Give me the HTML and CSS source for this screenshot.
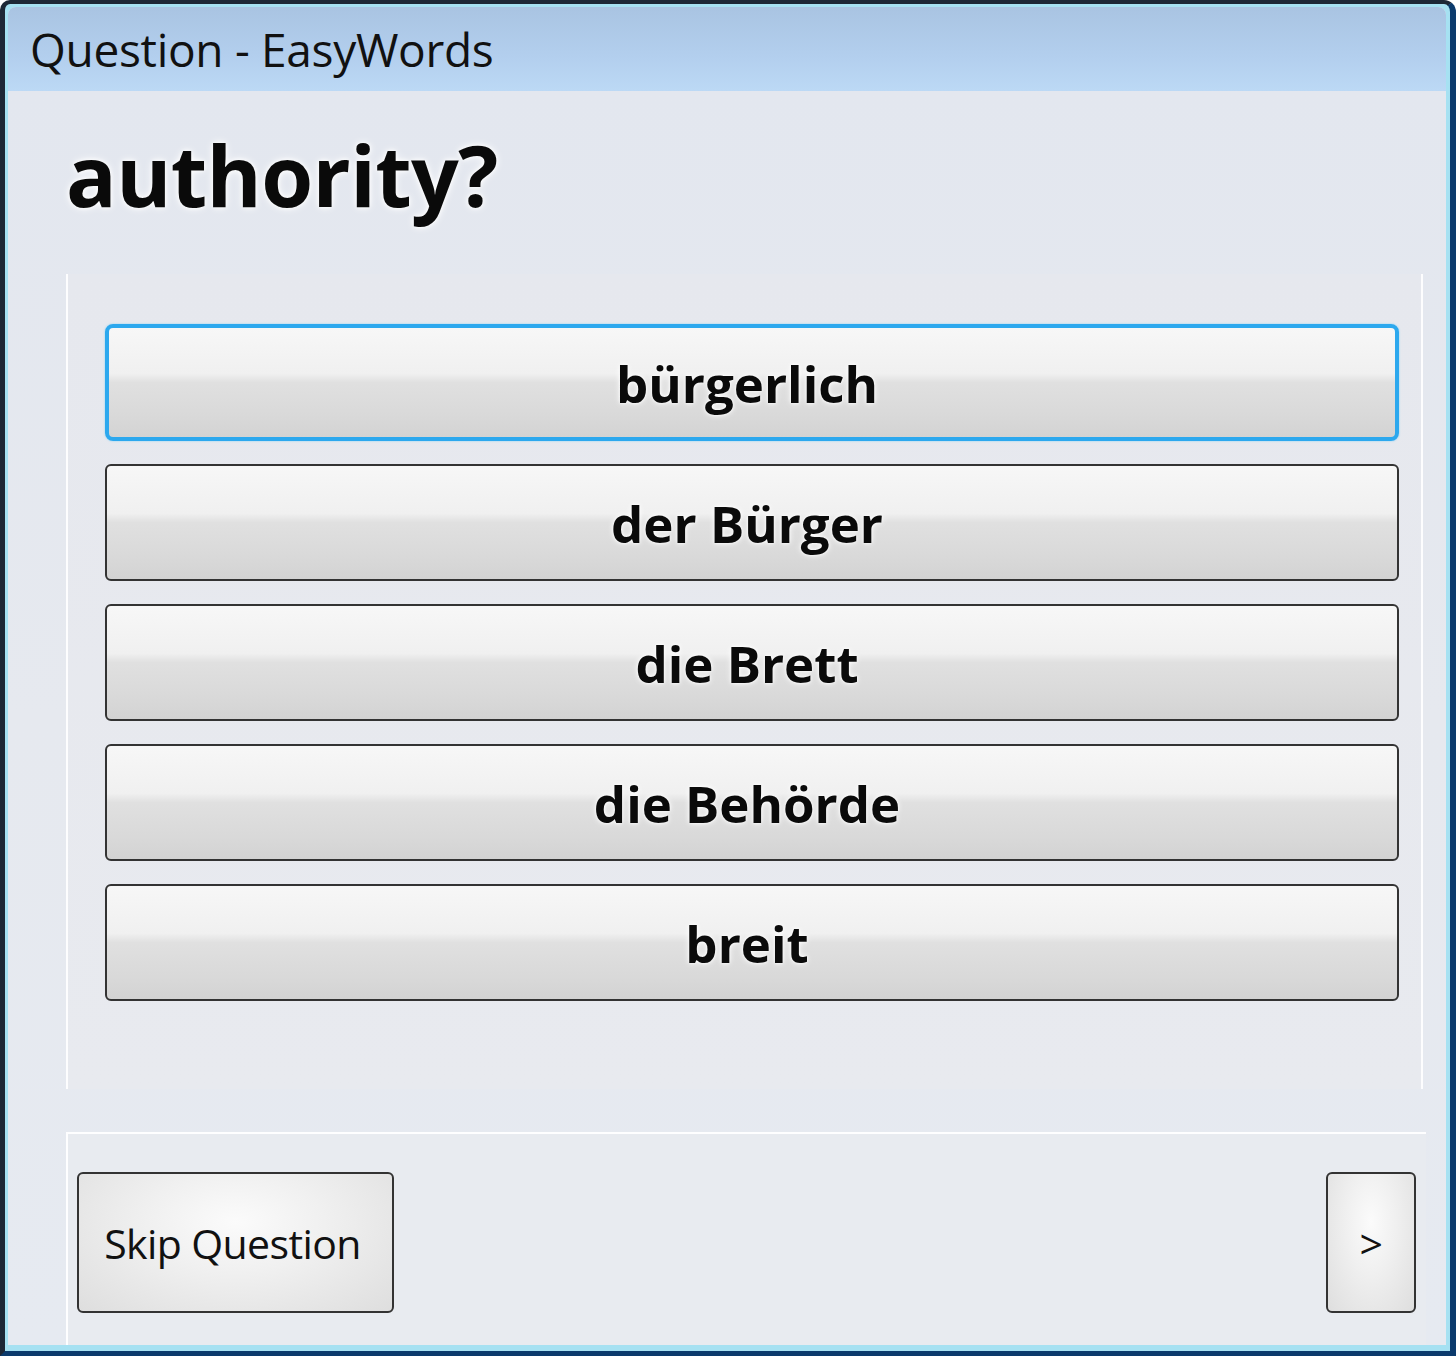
FILE: index.html
```html
<!DOCTYPE html>
<html>
<head>
<meta charset="utf-8">
<title>Question - EasyWords</title>
<link rel="stylesheet" href="styles.css">
</head>
<body>
<div class="window">
  <div class="frame">
    <div class="titlebar">Question - EasyWords</div>
    <div class="client">
      <div class="question">authority?</div>
      <div class="answers">
        <button class="answer focused">bürgerlich</button>
        <button class="answer">der Bürger</button>
        <button class="answer">die Brett</button>
        <button class="answer">die Behörde</button>
        <button class="answer">breit</button>
      </div>
      <div class="footer">
        <button class="nav skip">Skip Question</button>
        <button class="nav next">&gt;</button>
      </div>
    </div>
  </div>
</div>
</body>
</html>
```

FILE: styles.css
```css
html, body {
  margin: 0;
  padding: 0;
  width: 1456px;
  height: 1356px;
  overflow: hidden;
  background: #ffffff;
}

.window {
  box-sizing: border-box;
  width: 1456px;
  height: 1356px;
  border-left: 5px solid #1d2836;
  border-top: 4px solid #1d2836;
  border-right: 6px solid #0b3a6c;
  border-bottom: 5px solid #0b3a6c;
  border-radius: 10px 12px 0 0;
  background: #a6e1f2;
  padding: 3px 4px 6px 3px;
}

.frame {
  display: flex;
  flex-direction: column;
  height: 100%;
  border-radius: 8px 8px 0 0;
  overflow: hidden;
  background: #e4e8ef;
}

.titlebar {
  flex: 0 0 84px;
  display: flex;
  align-items: center;
  padding-left: 22px;
  background: linear-gradient(180deg, #a9c4e2 0%, #b3cfee 60%, #bcd9f5 100%);
  font-family: "Open Sans", "DejaVu Sans", sans-serif;
  font-size: 46px;
  color: #111;
  letter-spacing: -0.3px;
}

.client {
  flex: 1;
  display: flex;
  flex-direction: column;
  background: linear-gradient(180deg, #e3e7ef 0%, #e6e9ef 50%, #e6eaf1 100%);
  padding: 0 23px 0 58px;
}

.question {
  height: 183px;
  box-sizing: border-box;
  padding-top: 34px;
  font-family: "Open Sans", "DejaVu Sans", sans-serif;
  font-weight: 700;
  font-size: 84px;
  line-height: 1.2;
  color: #0a0a0a;
  letter-spacing: -0.6px;
  text-shadow: 0 0 4px #ffffff, 0 0 8px #ffffff;
}

.answers {
  display: flex;
  flex-direction: column;
  gap: 23px;
  height: 815px;
  box-sizing: border-box;
  padding: 50px 22px 0 37px;
  border-left: 2px solid rgba(255,255,255,0.9);
  border-right: 2px solid rgba(255,255,255,0.9);
  background: linear-gradient(180deg, #e6e8ee 0%, #e8eaef 100%);
}

.answer {
  height: 117px;
  box-sizing: border-box;
  border: 2px solid #333;
  border-radius: 6px;
  background: linear-gradient(180deg, #f7f7f7 0%, #f0f0f0 42%, #e0e0e0 50%, #d9d9d9 80%, #d3d3d3 100%);
  font-family: "Open Sans", "DejaVu Sans", sans-serif;
  font-weight: 700;
  font-size: 51px;
  color: #0a0a0a;
  letter-spacing: 0;
  text-shadow: 0 0 3px #ffffff, 0 0 6px #ffffff;
  padding: 0 10px 0 0;
  cursor: pointer;
}

.answer.focused {
  border: 4px solid #2ca8ee;
  border-radius: 8px;
  box-shadow: 0 0 2px #7fd0f7;
}

.footer {
  margin-top: 43px;
  flex: 1;
  display: flex;
  justify-content: space-between;
  align-items: flex-start;
  padding: 38px 10px 0 9px;
  margin-right: -3px;
  border-top: 2px solid rgba(255,255,255,0.95);
  border-left: 2px solid rgba(255,255,255,0.95);
  background: #e8ebf0;
}

.nav {
  height: 141px;
  box-sizing: border-box;
  border: 2px solid #333;
  border-radius: 6px;
  background: radial-gradient(ellipse at 50% 35%, #fbfbfb 0%, #f0f0f0 40%, #dedede 100%);
  font-family: "Open Sans", "DejaVu Sans", sans-serif;
  font-size: 41px;
  color: #111;
  padding: 0;
  letter-spacing: -0.6px;
}

.skip {
  width: 317px;
  padding-right: 6px;
}

.next {
  width: 90px;
}
```
